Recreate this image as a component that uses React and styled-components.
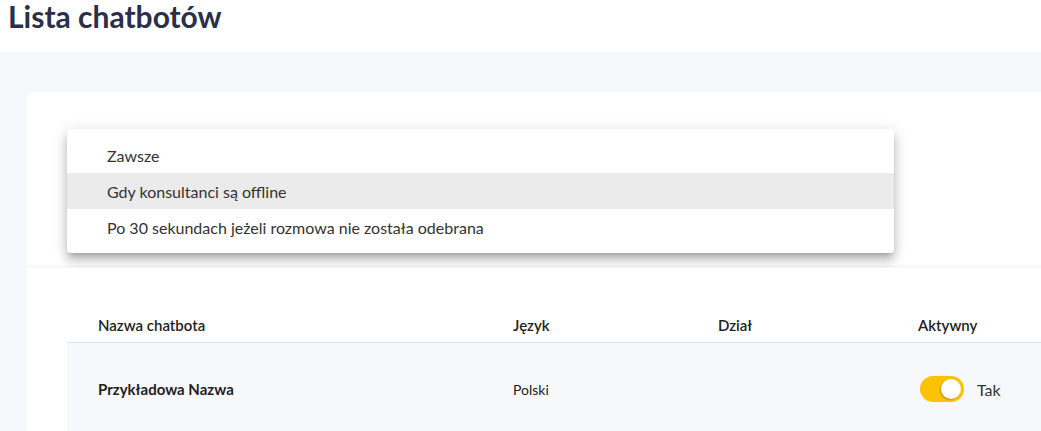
import React from "react";
import styled, { createGlobalStyle } from "styled-components";

const GlobalStyle = createGlobalStyle`
  html, body {
    margin: 0;
    padding: 0;
    background: #ffffff;
    font-family: Lato, "Open Sans", "Liberation Sans", sans-serif;
    overflow: hidden;
  }
`;

const options = [
  "Zawsze",
  "Gdy konsultanci są offline",
  "Po 30 sekundach jeżeli rozmowa nie została odebrana",
];

const App = () => {
  return (
    <Page>
      <GlobalStyle />
      <Header>
        <Title>Lista chatbotów</Title>
      </Header>
      <Body>
        <Card top>
          <Menu>
            {options.map((o, i) => (
              <MenuItem key={o} active={i === 1}>
                {o}
              </MenuItem>
            ))}
          </Menu>
        </Card>
        <Card>
          <Table>
            <HeadRow>
              <HeadCell>Nazwa chatbota</HeadCell>
              <HeadCell>Język</HeadCell>
              <HeadCell>Dział</HeadCell>
              <HeadCell>Aktywny</HeadCell>
            </HeadRow>
            <Row>
              <Cell bold>Przykładowa Nazwa</Cell>
              <Cell small>Polski</Cell>
              <Cell />
              <Cell>
                <Switch>
                  <Knob />
                </Switch>
                <SwitchLabel>Tak</SwitchLabel>
              </Cell>
            </Row>
          </Table>
        </Card>
      </Body>
    </Page>
  );
};

const Page = styled.div`
  width: 1041px;
  height: 431px;
  overflow: hidden;
  display: flex;
  flex-direction: column;
`;

const Header = styled.header`
  height: 52px;
  padding-left: 8px;
  flex-shrink: 0;
`;

const Title = styled.h1`
  margin: 0;
  padding-top: 1px;
  font-size: 30px;
  line-height: 30px;
  font-weight: 700;
  color: #2b3049;
`;

const Body = styled.div`
  flex: 1;
  background: #f7f8fc;
  padding: 40px 0 0 27px;
  display: flex;
  flex-direction: column;
  gap: 3px;
`;

const Card = styled.section`
  background: #ffffff;
  border-top-left-radius: ${(p) => (p.top ? "8px" : "0")};
  padding: ${(p) => (p.top ? "37px 40px 12px" : "40px 0 0 40px")};
  flex: ${(p) => (p.top ? "0 0 auto" : "1")};
`;

const Menu = styled.ul`
  list-style: none;
  margin: 0;
  padding: 8px 0;
  width: 827px;
  background: #ffffff;
  border-radius: 4px;
  box-shadow: 0 5px 5px -3px rgba(0, 0, 0, 0.2),
    0 8px 10px 1px rgba(0, 0, 0, 0.14), 0 3px 14px 2px rgba(0, 0, 0, 0.12);
`;

const MenuItem = styled.li`
  height: 36px;
  display: flex;
  align-items: center;
  padding-left: 40px;
  font-size: 16px;
  color: #333333;
  background: ${(p) => (p.active ? "#ebebeb" : "transparent")};
`;

const Table = styled.div`
  display: flex;
  flex-direction: column;
`;

const grid = `
  display: grid;
  grid-template-columns: 415px 205px 200px 1fr;
`;

const HeadRow = styled.div`
  ${grid};
  height: 34px;
  border-bottom: 1px solid #dfe2ea;
`;

const HeadCell = styled.div`
  display: flex;
  align-items: center;
  padding-left: 31px;
  font-size: 15px;
  font-weight: 600;
  color: #222222;
`;

const Row = styled.div`
  ${grid};
  height: 92px;
  background: #f7f8fc;
`;

const Cell = styled.div`
  display: flex;
  align-items: center;
  padding-left: 31px;
  font-size: ${(p) => (p.small ? "14px" : "15px")};
  font-weight: ${(p) => (p.bold ? 700 : 400)};
  color: #222222;
`;

const Switch = styled.span`
  position: relative;
  display: inline-block;
  width: 44px;
  height: 26px;
  margin-left: 2px;
  border-radius: 13px;
  background: #fdc300;
`;

const Knob = styled.span`
  position: absolute;
  top: 3px;
  right: 3px;
  width: 20px;
  height: 20px;
  border-radius: 50%;
  background: #ffffff;
  box-shadow: -1px 1px 2px rgba(0, 0, 0, 0.25);
`;

const SwitchLabel = styled.span`
  margin-left: 13px;
  font-size: 16px;
  color: #333333;
`;

export default App;
